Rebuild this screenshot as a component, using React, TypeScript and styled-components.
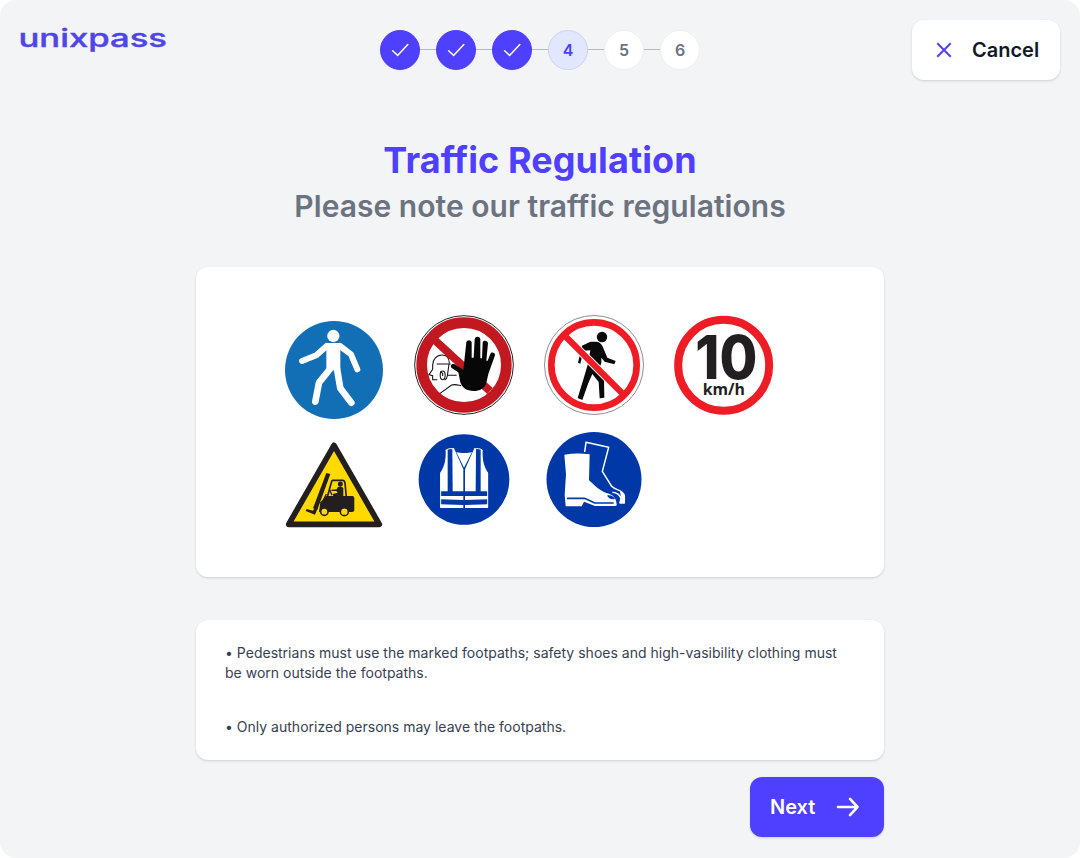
import React from "react";
import styled, { createGlobalStyle } from "styled-components";

const GlobalStyle = createGlobalStyle`
  * {
    box-sizing: border-box;
  }

  body {
    margin: 0;
    background-color: #ffffff;
    font-family: Inter, "Liberation Sans", sans-serif;
  }
`;

const Page = styled.div`
  display: flex;
  flex-direction: column;
  height: 858px;
  background-color: #f3f4f6;
  border-radius: 16px;
  overflow: hidden;
`;

const Header = styled.header`
  display: grid;
  grid-template-columns: 1fr auto 1fr;
  align-items: start;
  height: 100px;
  padding: 20px 20px 0;
`;

const Logo = styled.svg`
  display: block;
  width: 150px;
  height: 40px;
  overflow: visible;
`;

const LogoText = styled.text`
  font-size: 25px;
  font-weight: 500;
  fill: #4f46e5;
  stroke: #4f46e5;
  stroke-width: 0.4px;
`;

const Steps = styled.ol`
  display: flex;
  align-items: center;
  list-style: none;
  margin: 10px 0 0;
  padding: 0;
`;

type StepState = "done" | "current" | "todo";

const stepColors = {
  done: { bg: "#4f40ff", border: "#4f40ff", text: "#ffffff" },
  current: { bg: "#e0e7ff", border: "#cdd3f0", text: "#4f40ff" },
  todo: { bg: "#ffffff", border: "#eeeff1", text: "#6b7280" },
};

const Step = styled.li<{ $state: StepState }>`
  display: flex;
  align-items: center;
  justify-content: center;
  width: 40px;
  height: 40px;
  border-radius: 50%;
  border: 1px solid ${(props) => stepColors[props.$state].border};
  background-color: ${(props) => stepColors[props.$state].bg};
  color: ${(props) => stepColors[props.$state].text};
  font-size: 16px;
  font-weight: 600;
`;

const StepLine = styled.li`
  width: 16px;
  height: 1px;
  margin-bottom: 1px;
  background-color: #b4bac2;
`;

const CancelButton = styled.button`
  display: flex;
  align-items: center;
  justify-self: end;
  gap: 20px;
  width: 148px;
  height: 60px;
  padding: 0 0 0 24px;
  border: none;
  border-radius: 12px;
  background-color: #ffffff;
  box-shadow: 0 1px 3px rgba(0, 0, 0, 0.1), 0 1px 2px rgba(0, 0, 0, 0.06);
  color: #111827;
  font-family: inherit;
  font-size: 20px;
  font-weight: 600;
  cursor: pointer;
`;

const Main = styled.main`
  display: flex;
  flex-direction: column;
  width: 688px;
  margin: 0 auto;
`;

const Title = styled.h1`
  margin: 38px 0 0;
  color: #4f40ff;
  font-size: 36px;
  font-weight: 700;
  line-height: 44px;
  letter-spacing: 0.08px;
  text-align: center;
`;

const Subtitle = styled.h2`
  margin: 4px 0 0;
  color: #6b7280;
  font-size: 30px;
  font-weight: 600;
  line-height: 40px;
  letter-spacing: 0.04px;
  text-align: center;
`;

const Card = styled.section`
  border-radius: 12px;
  background-color: #ffffff;
  box-shadow: 0 1px 3px rgba(0, 0, 0, 0.1), 0 1px 2px rgba(0, 0, 0, 0.06);
`;

const SignsCard = styled(Card)`
  display: grid;
  grid-template-columns: repeat(4, 100px);
  grid-template-rows: 105px 100px;
  gap: 10px 30px;
  height: 310px;
  margin-top: 41px;
  padding: 48px 88px;
`;

const Sign = styled.svg<{ $low?: boolean }>`
  display: block;
  width: 100px;
  height: 100px;
  align-self: ${(props) => (props.$low ? "end" : "start")};
`;

const SpeedValue = styled.text`
  font-size: 180px;
  font-weight: 800;
`;

const SpeedUnit = styled.text`
  font-family: "Open Sans", sans-serif;
  font-size: 46px;
  font-weight: 700;
`;

const RulesCard = styled(Card)`
  height: 140px;
  margin-top: 43px;
  padding: 23px 29px;
`;

const Rule = styled.p`
  margin: 0 0 34px;
  color: #374151;
  font-size: 14px;
  line-height: 20px;
  letter-spacing: 0.01px;
`;

const NextButton = styled.button`
  display: flex;
  align-items: center;
  align-self: flex-end;
  gap: 21px;
  width: 134px;
  height: 60px;
  margin-top: 17px;
  padding: 0 0 0 20px;
  border: none;
  border-radius: 12px;
  background-color: #4f40ff;
  box-shadow: 0 1px 3px rgba(0, 0, 0, 0.1), 0 1px 2px rgba(0, 0, 0, 0.06);
  color: #ffffff;
  font-family: inherit;
  font-size: 20px;
  font-weight: 600;
  cursor: pointer;
`;

const steps: StepState[] = ["done", "done", "done", "current", "todo", "todo"];

const rules = [
  "• Pedestrians must use the marked footpaths; safety shoes and high-vasibility clothing must be worn outside the footpaths.",
  "• Only authorized persons may leave the footpaths.",
];

function CheckIcon() {
  return (
    <svg width="18" height="14" viewBox="0 0 18 14" fill="none">
      <path
        d="M1.6 7.8L6.6 12.4L16.8 1.6"
        stroke="#ffffff"
        strokeWidth="1.5"
        strokeLinecap="round"
        strokeLinejoin="round"
      />
    </svg>
  );
}

function FootpathSign() {
  return (
    <Sign $low viewBox="12 30 300 300">
      <circle cx="162" cy="180" r="147" fill="#126eb5" />
      <circle cx="160" cy="78" r="18.5" fill="#fff" />
      <path d="M138 99H183L181 122V178L161 181L139 178V118Z" fill="#fff" />
      <g fill="none" stroke="#fff" strokeWidth="18" strokeLinecap="round" strokeLinejoin="round">
        <path d="M140 108L109 136L66 153" />
        <path d="M180 108L213 133L232 178" />
      </g>
      <g fill="none" stroke="#fff" strokeWidth="20" strokeLinecap="round" strokeLinejoin="round">
        <path d="M150 177L117 218L106 275" />
        <path d="M171 176L181 235L214 278" />
      </g>
    </Sign>
  );
}

function NoEntrySign() {
  return (
    <Sign viewBox="12 15 300 300">
      <circle cx="162" cy="165" r="148" fill="#fff" stroke="#222" strokeWidth="3" />
      <circle cx="162" cy="165" r="127" fill="#fff" stroke="#c1191f" strokeWidth="32" />
      <g fill="none" stroke="#111" strokeWidth="3.2">
        <path d="M68 166C68 148 80 135 96 135C112 135 118 146 118 160M80 162H122" />
        <path d="M68 165V178L57 194L68 197V209H82" />
        <path d="M117 162L112 198C111 205 108 208 104 210" />
        <ellipse cx="98" cy="196" rx="7.5" ry="13" />
        <path d="M90 185L98 190V198" />
        <path d="M114 196H140M90 250L125 225C134 222 143 225 154 227" />
      </g>
      <path d="M76 92L240 243" stroke="#c1191f" strokeWidth="24" />
      <path
        d="M145 187L125 174C119 168 125 160 134 163L160 179L169 97C170 89 184 89 185 97V143H191L194 88C195 78 210 78 211 88V145H216L218 98C219 89 234 91 234 100L229 152H233L241 132C244 124 257 128 255 136L235 192L229 219C223 236 209 243 191 243C170 243 157 234 151 217Z"
        fill="#070707"
      />
    </Sign>
  );
}

function NoPedestriansSign() {
  return (
    <Sign viewBox="12 15 300 300">
      <circle cx="162" cy="165" r="148.5" fill="#fff" stroke="#777" strokeWidth="2.5" />
      <g fill="#0a0a0a">
        <circle cx="186" cy="81" r="15.5" />
        <path d="M126 107L151 95H169C181 96 188 106 192 119L202 143L227 153L223 163L194 155L184 143V159L176 181L192 208L193 263L179 265L176 216L157 192L145 219L127 270L113 264L132 202L143 164L151 121L131 122L121 161L114 158Z" />
      </g>
      <path d="M76 79L248 251" stroke="#fff" strokeWidth="25" />
      <path d="M76 79L248 251" stroke="#ee1c25" strokeWidth="19" />
      <circle cx="162" cy="165" r="128" fill="none" stroke="#ee1c25" strokeWidth="20" />
    </Sign>
  );
}

function SpeedLimitSign() {
  return (
    <Sign viewBox="12 15 300 300">
      <circle cx="161" cy="166" r="136.5" fill="#fff" stroke="#ee1c25" strokeWidth="24" />
      <g fill="#231f20">
        <SpeedValue x="76" y="206" textLength="186" lengthAdjust="spacingAndGlyphs">
          10
        </SpeedValue>
        <SpeedUnit x="98" y="256" textLength="127" lengthAdjust="spacingAndGlyphs">
          km/h
        </SpeedUnit>
      </g>
    </Sign>
  );
}

function ForkliftSign() {
  return (
    <Sign viewBox="12 -15 300 300">
      <path
        d="M162 31L298 268H26Z"
        fill="#ffd900"
        stroke="#231f20"
        strokeWidth="17"
        strokeLinejoin="round"
      />
      <g fill="#231f20">
        <path d="M139 114L151 117L112 224L99 220Z" />
        <path d="M80 222L99 227L105 217L113 220L105 239L77 228Z" />
        <path d="M121 202L139 183H220L223 190V226C223 230 220 231 216 231H117Z" />
        <circle cx="181" cy="147" r="7.5" />
        <path d="M173 157C177 153 187 154 190 160V186H161L158 177L173 173L169 168L154 168V164L170 163Z" />
      </g>
      <path d="M156 136H188C192 136 194 139 195 144L199 186M156 136L142 186" fill="none" stroke="#231f20" strokeWidth="5" />
      <path d="M149 164L156 181M139 177L126 204" stroke="#231f20" strokeWidth="4" />
      <g fill="#ffd900" stroke="#231f20" strokeWidth="5">
        <circle cx="133" cy="230" r="11" />
        <circle cx="193" cy="230" r="12" />
      </g>
    </Sign>
  );
}

function VestSign() {
  return (
    <Sign viewBox="12 15 300 300">
      <circle cx="162" cy="163.5" r="136" fill="#0038a8" />
      <g fill="#fff">
        <path d="M139 81L162 128L186 81C174 85 151 85 139 81Z" />
        <path d="M107 76L113 73V199H91V143C104 125 108 104 107 76Z" />
        <path d="M127 71L132 70L160 133V199H128Z" />
        <path d="M198 71L193 70L165 133V199H197Z" />
        <path d="M218 76L212 73V199H234V143C221 125 217 104 218 76Z" />
        <path d="M91 213H160V225L91 223ZM165 213H234V223L165 225Z" />
        <path d="M91 238L160 240V249H91ZM165 240L234 238V249H165Z" />
      </g>
      <path d="M107 76C115 70 124 70 132 72M218 76C210 70 201 70 193 72M92 143V248M233 143V248" fill="none" stroke="#fff" strokeWidth="3" />
    </Sign>
  );
}

function BootsSign() {
  return (
    <Sign viewBox="12 15 300 300">
      <circle cx="162" cy="163.5" r="142.5" fill="#0038a8" />
      <path
        d="M73 89C98 85 125 85 149 88L147 166C165 183 180 198 201 205C218 209 229 218 230 238C231 242 229 243 225 243H165L132 230L125 244H77L74 210L78 148Z"
        fill="#fff"
      />
      <path d="M81 220H134L164 234H221" fill="none" stroke="#0038a8" strokeWidth="5" />
      <path d="M201 212C210 209 219 212 225 222C214 224 207 221 201 212Z" fill="#0038a8" />
      <path d="M134 81L138 52L206 67L187 139L215 184C226 196 247 193 253 211V234H240L243 221C239 207 229 203 217 202" fill="none" stroke="#fff" strokeWidth="4.5" strokeLinejoin="round" />
      <path d="M240 200C247 202 251 205 253 211V234H238L244 220Z" fill="#fff" />
    </Sign>
  );
}

export default function App() {
  return (
    <>
      <GlobalStyle />
      <Page>
        <Header>
          <Logo viewBox="0 0 150 40">
            <LogoText x="-1.5" y="27" textLength="148.5" lengthAdjust="spacingAndGlyphs">
              unixpass
            </LogoText>
          </Logo>
          <Steps>
            {steps.map((state, index) => (
              <React.Fragment key={index}>
                {index > 0 && <StepLine />}
                <Step $state={state}>
                  {state === "done" ? <CheckIcon /> : index + 1}
                </Step>
              </React.Fragment>
            ))}
          </Steps>
          <CancelButton>
            <svg width="16" height="16" viewBox="0 0 16 16">
              <path d="M1.3 1.3L14.7 14.7M14.7 1.3L1.3 14.7" stroke="#4f40ff" strokeWidth="2" />
            </svg>
            Cancel
          </CancelButton>
        </Header>

        <Main>
          <Title>Traffic Regulation</Title>
          <Subtitle>Please note our traffic regulations</Subtitle>

          <SignsCard>
            <FootpathSign />
            <NoEntrySign />
            <NoPedestriansSign />
            <SpeedLimitSign />
            <ForkliftSign />
            <VestSign />
            <BootsSign />
          </SignsCard>

          <RulesCard>
            {rules.map((rule) => (
              <Rule key={rule}>{rule}</Rule>
            ))}
          </RulesCard>

          <NextButton>
            Next
            <svg width="24" height="20" viewBox="0 0 24 20" fill="none">
              <path
                d="M2 10H21.5M14 1.9L21.5 10L14 18.1"
                stroke="#ffffff"
                strokeWidth="2.6"
                strokeLinecap="round"
                strokeLinejoin="round"
              />
            </svg>
          </NextButton>
        </Main>
      </Page>
    </>
  );
}
